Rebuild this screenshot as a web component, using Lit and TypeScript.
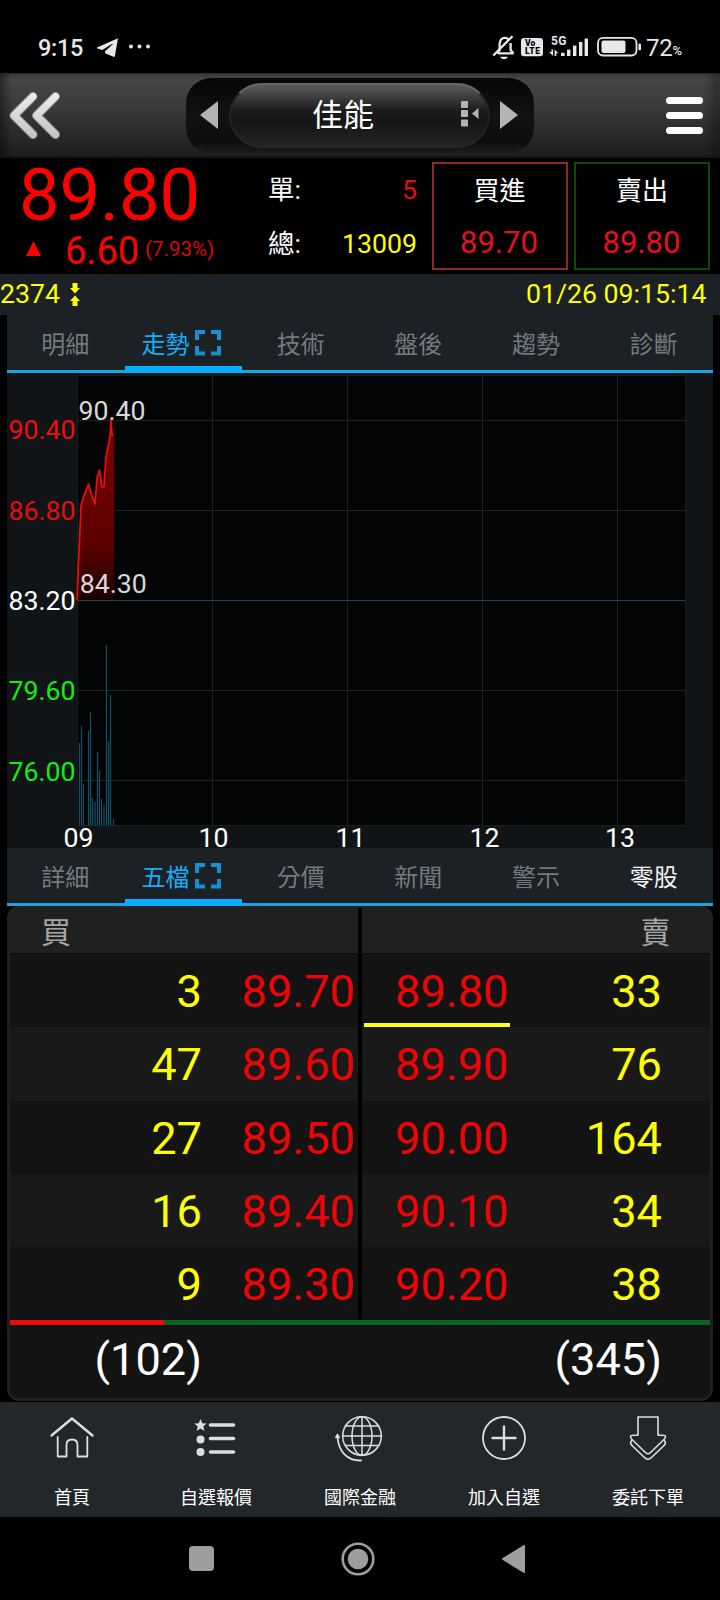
import { LitElement, html, css, svg } from "lit";
import { customElement, property } from "lit/decorators.js";
import { classMap } from "lit/directives/class-map.js";

const FONT = css`Roboto, "Noto Sans CJK TC", sans-serif`;

@customElement("status-bar")
class StatusBar extends LitElement {
  static styles = css`
    :host { display: flex; justify-content: space-between; height: 73px; box-sizing: border-box;
      padding: 34px 38px 0 38px; color: #e8e8e8; font: 400 24px/28px ${FONT}; }
    .group { display: flex; align-items: flex-start; }
    .clock { width: 59px; letter-spacing: -0.3px; font-weight: 500; font-size: 23.5px; }
    .batt { margin-left: 3px; letter-spacing: -0.3px; }
    .pct { font-size: 13px; line-height: 34px; font-weight: 500; }
    svg { display: block; }
  `;
  render() {
    return html`
      <div class="group">
        <span class="clock">9:15</span>
        <svg width="56" height="26" viewBox="97 34 56 26" fill="#e8e8e8">
          <path d="M118 38.2 97 47.4c-.4.5-.2 1 .4 1.2l4.9 1.500 9.6-6.200c.6-.3 1 .1.600.5l-7.600 7.200.2 1.600 8.300 3.600c.7.3 1.300 0 1.500-.8z"/>
          <circle cx="131" cy="46.500" r="2"/><circle cx="139.500" cy="46.500" r="2"/><circle cx="148" cy="46.500" r="2"/>
        </svg>
      </div>
      <div class="group">
        <svg width="152" height="26" viewBox="491 34 152 26">
          <g fill="none" stroke="#e8e8e8" stroke-width="2.300">
            <path d="M498 53.400h15.500M497 53.300l2.600-3.300v-5.200c0-4.600 2.400-7 5.200-7 1.600 0 2.800.5 3.800 1.600M510.600 43v7l3 3.400"/>
            <path d="M493.300 55.500 512.500 36.200"/>
          </g>
          <path d="M500 56.800h8c-.8 1.600-2.200 2.400-4 2.400s-3.200-.8-4-2.400z" fill="#e8e8e8"/>
          <rect x="521" y="38" width="22" height="18.300" rx="3" fill="#e8e8e8"/>
          <text x="525" y="46.400" font-family="Roboto" font-weight="900" font-size="8.500">Vo</text>
          <text x="525" y="54.400" font-family="Roboto" font-weight="900" font-size="8.500" textLength="15">LTE</text>
          <text x="551" y="45.400" font-family="Roboto" font-weight="700" font-size="12" fill="#e8e8e8" textLength="15.500">5G</text>
          <g fill="#e8e8e8">
            <path d="M551.400 49.500h1.700v6.400l-4-4h2.300zM554.600 56v-6.600l3.800 3.800h-2.100V56z"/>
            <rect x="561" y="52.800" width="3.600" height="3.200"/><rect x="567" y="49.600" width="3.400" height="6.400"/>
            <rect x="573" y="45.600" width="3.400" height="10.400"/><rect x="579" y="42" width="3.400" height="14"/>
            <rect x="584.600" y="38.600" width="3.400" height="17.400"/>
            <rect x="601.500" y="40.500" width="24" height="12.600" rx="2"/>
            <rect x="638.400" y="43.600" width="2.600" height="6.600" rx="1"/>
          </g>
          <rect x="598" y="37.800" width="38.500" height="17.700" rx="5" fill="none" stroke="#e8e8e8" stroke-width="1.800"/>
        </svg>
        <span class="batt">72</span><span class="pct">%</span>
      </div>`;
  }
}

@customElement("title-bar")
class TitleBar extends LitElement {
  static styles = css`
    :host { display: grid; grid-template-columns: 178px 348px 1fr; align-items: center; height: 85px; box-sizing: border-box;
      padding: 0 17px 0 8px; border-top: 1px solid #2b2b2b; border-bottom: 2px solid #141414;
      background: linear-gradient(90deg, #0006, #0000 12px, #0000 704px, #0004 716px), linear-gradient(#383838, #464646 6%, #3a3a3a 40%, #2a2a2a 72%, #1e1e1e);
      color: #fff; font-family: ${FONT}; }
    .pod { display: flex; align-items: center; justify-content: space-between; width: 348px; height: 75px;
      box-sizing: border-box; padding: 0 16px 0 14px; border-radius: 25px;
      background: linear-gradient(#060606, #121212 50%, #0c0c0c 85%, #1c1c1c); }
    .pill { display: grid; grid-template-columns: 1fr 21px; align-items: center; width: 261px; height: 65px; box-sizing: border-box;
      padding: 0 9px 0 32px; border-radius: 33px; border: 2px solid #222; border-top-color: #666; border-bottom-color: #262626;
      background: linear-gradient(#5b5b5b, #3a3a3a 22%, #1b1b1b 42%, #161616 60%, #242424); }
    .name { font-size: 31px; line-height: 61px; text-align: center; padding-right: 34px; }
    .pill svg { margin-left: 3px; margin-bottom: 3px; }
    .menu { justify-self: end; }
    svg { display: block; }
  `;
  render() {
    return html`
      <svg width="54" height="50" viewBox="8 90 54 50" fill="none" stroke-linecap="round" stroke-linejoin="round">
        <defs><linearGradient id="g" x1="0" y1="92" x2="0" y2="138" gradientUnits="userSpaceOnUse">
          <stop offset="0" stop-color="#eee"/><stop offset="1" stop-color="#c4c4c4"/></linearGradient></defs>
        <path d="M33 96.500 14 115.500 33 134.500M55.500 96.500 36.500 115.500 55.500 134.500" stroke="#8a8a8a" stroke-width="9"/>
        <path d="M33 96.500 14 115.500 33 134.500M55.500 96.500 36.500 115.500 55.500 134.500" stroke="url(#g)" stroke-width="7"/>
      </svg>
      <div class="pod">
        <svg width="18" height="28" viewBox="0 0 18 28"><path d="M0 14 18 0v28z" fill="#b4b4b4"/></svg>
        <div class="pill">
          <div class="name">佳能</div>
          <svg width="18" height="26" viewBox="0 0 18 26" fill="#b4b4b4">
            <rect width="7" height="7" rx="1"/><rect y="9" width="7" height="7" rx="1"/><rect y="18.500" width="7" height="7" rx="1"/>
            <path d="M11 12.500 17.500 7v11z"/>
          </svg>
        </div>
        <svg width="18" height="28" viewBox="0 0 18 28"><path d="M18 14 0 0v28z" fill="#b4b4b4"/></svg>
      </div>
      <svg class="menu" width="37" height="37" viewBox="0 0 37 37" fill="#fff">
        <rect width="37" height="7" rx="3.500"/><rect y="15" width="37" height="7" rx="3.500"/><rect y="30" width="37" height="7" rx="3.500"/>
      </svg>`;
  }
}

@customElement("quote-summary")
class QuoteSummary extends LitElement {
  static styles = css`
    :host { display: block; font-family: ${FONT}; color: #fff; }
    .top { display: grid; grid-template-columns: 268px 150px 135px 135px; height: 116px; box-sizing: border-box; }
    .last { font-size: 72px; line-height: 72px; padding: 2px 0 0 19px; color: #f00; }
    .change { display: flex; color: #f00; font-size: 38px; line-height: 38px; padding-left: 26px; }
    .up { margin: 9px 24px 0 0; }
    .ratio { font-size: 20.500px; line-height: 34px; margin-left: 6px; color: #d80808; }
    .volume { padding: 5px 1px 0 0; }
    .line { display: flex; justify-content: space-between; font-size: 26.500px; line-height: 54px; height: 54px; }
    .line span + span { font-size: 26.700px; }
    .red { color: #e60d0d; }
    .yellow { color: #ff0; }
    .deal { margin: 4px 0 4px 13.500px; width: 136px; border: 2px solid #8c2a2a; box-sizing: border-box; text-align: center;
      font-size: 26px; line-height: 54px; }
    .deal.sell { margin-left: 21px; border-color: #0d480d; }
    .deal .price { font-size: 31px; line-height: 50px; color: #e6101c; padding-right: 1px; }
    .stamp { display: flex; justify-content: space-between; height: 41px; padding-right: 13.500px; color: #ff0;
      background: #1b2124; font-size: 26.700px; line-height: 41px; }
    .code { display: flex; gap: 10px; }
    .code svg { margin-top: 9px; }
    svg { display: block; }
  `;
  render() {
    return html`
      <div class="top">
        <div>
          <div class="last">89.80</div>
          <div class="change">
            <svg class="up" width="15" height="15" viewBox="0 0 15 15"><path d="M7.500 0 15 15H0z" fill="#f00"/></svg>
            <span>6.60</span><span class="ratio">(7.93%)</span>
          </div>
        </div>
        <div class="volume">
          <div class="line"><span>單:</span><span class="red">5</span></div>
          <div class="line"><span>總:</span><span class="yellow">13009</span></div>
        </div>
        <div class="deal">買進<div class="price">89.70</div></div>
        <div class="deal sell">賣出<div class="price">89.80</div></div>
      </div>
      <div class="stamp">
        <span class="code">2374
          <svg width="10" height="23" viewBox="0 0 10 23" fill="#ff0">
            <path d="M2.500 0h5v5H10L5 10.500 0 5h2.500zM2.500 23h5v-5H10L5 12.500 0 18h2.500z"/>
          </svg>
        </span>
        <span>01/26 09:15:14</span>
      </div>`;
  }
}

@customElement("tab-strip")
class TabStrip extends LitElement {
  @property({ attribute: false }) tabs: string[] = [];
  @property({ type: Number }) lit = -1;
  static styles = css`
    :host { display: grid; grid-template-columns: repeat(6, 1fr); height: 58px; margin: 0 7px; background: #1b2124;
      box-shadow: inset 0 -3px #1ba4e4; font: 400 24px/60px ${FONT}; color: #747a7e; }
    .tab { display: flex; justify-content: center; gap: 6px; box-sizing: border-box; height: 58px; padding-right: 1px; }
    .active { color: #16aefc; border-bottom: 7px solid #07aefc; padding-right: 4px; }
    .bright { color: #f2f2f2; }
    svg { display: block; margin-top: 15px; }
  `;
  render() {
    return this.tabs.map((t, i) => html`
      <div class=${classMap({ tab: true, active: i === 1, bright: i === this.lit })}>
        <span>${t}</span>
        ${i === 1 ? html`<svg width="26" height="26" viewBox="0 0 26 26" fill="none" stroke="#1a8fd0" stroke-width="4">
          <path d="M2 10V2h8M16 2h8v8M24 16v7.500h-8M10 23.500H2V16"/></svg>` : ""}
      </div>`);
  }
}

@customElement("trend-chart")
class TrendChart extends LitElement {
  static styles = css`
    :host { display: block; height: 475px; margin: 0 7px; background: #111417; }
    svg { display: block; overflow: visible; font: 400 26.700px Roboto, sans-serif; }
    .grid { stroke: #1e2224; fill: none; }
    .base { stroke: #26414f; }
    .vol { stroke: #15506a; stroke-width: 1.200; }
    .price { fill: none; stroke: #f00a0a; stroke-width: 1.700; stroke-linejoin: round; }
    .edge { fill: #d8d8d8; }
    .time { fill: #fff; }
  `;
  render() {
    const line = "M77 600 78.500 563 81 506 83.500 497 88.500 484 91 493 95 504 97 478 99.500 470 102 487 104 487 106 457 110 437 111 420 112 434 113 436";
    const volumes = [[79.500, 743], [81.500, 726], [83.500, 784], [88.500, 731], [90.500, 712], [92.500, 798], [95, 802], [97.500, 752],
      [99.500, 771], [101.500, 799], [104, 805], [106.500, 645], [108.500, 741], [110.500, 695], [113.500, 819]];
    const scale: [string, number, string][] = [["90.40", 439, "#f00d0d"], ["86.80", 519.500, "#e60d0d"], ["83.20", 609.500, "#fff"],
      ["79.60", 699.500, "#12ee12"], ["76.00", 780.500, "#12ee12"]];
    const hours: [string, number][] = [["09", 78.500], ["10", 213.500], ["11", 350.500], ["12", 484.500], ["13", 620]];
    return html`
      <svg width="706" height="475" viewBox="7 373 706 475">
        <defs><linearGradient id="fill" x1="0" y1="420" x2="0" y2="600" gradientUnits="userSpaceOnUse">
          <stop offset="0" stop-color="#7a0000"/><stop offset=".7" stop-color="#5c0000"/><stop offset="1" stop-color="#1c0000"/>
        </linearGradient></defs>
        <rect x="77.500" y="375.500" width="608" height="450" fill="#030504" stroke="#1a1d1f"/>
        ${[212.500, 347.500, 482.500, 617.500].map((x) => svg`<path class="grid" d="M${x} 376V825"/>`)}
        ${[420.500, 510.500, 690.500, 780.500].map((y) => svg`<path class="grid" d="M78 ${y}H685"/>`)}
        ${volumes.map(([x, y]) => svg`<path class="vol" d="M${x} ${y}V825.500"/>`)}
        <path d="${line} 114 436V600H77z" fill="url(#fill)"/>
        <path class="base" d="M78 600.500H685"/>
        <path class="price" d=${line}/>
        ${scale.map(([t, y, c]) => svg`<text x="8.500" y=${y} fill=${c}>${t}</text>`)}
        <text class="edge" x="78.500" y="419.500">90.40</text>
        <text class="edge" x="79.800" y="592.500">84.30</text>
        ${hours.map(([t, x]) => svg`<text class="time" x=${x} y="847" text-anchor="middle">${t}</text>`)}
      </svg>`;
  }
}

@customElement("order-book")
class OrderBook extends LitElement {
  static styles = css`
    :host { display: block; height: 495px; box-sizing: border-box; margin: 0 7px; padding: 0 3px; border-radius: 12px;
      background: #202020; color: #fff; font: 400 45.200px/75px ${FONT}; }
    .head, .row { display: grid; grid-template-columns: 348px 4px 1fr; }
    .head { height: 48px; border-bottom: 1px solid #0b0b0b; box-sizing: border-box; font-size: 30px; line-height: 53px; font-weight: 400; color: #a6a6a6; }
    .left { padding-left: 31px; }
    .right { padding-right: 39.500px; text-align: right; }
    .mid { background: #000; }
    .head .mid { margin-top: 2px; }
    .row { height: 73.300px; background: #131313; }
    .row:nth-child(odd) { background: #191919; }
    .bid, .ask { display: grid; height: 73.300px; text-align: right; }
    .bid { grid-template-columns: 192px 1fr; padding-right: 3px; }
    .ask { grid-template-columns: 147.500px 1fr; padding-right: 48px; }
    .qty { color: #ff0; }
    .price { color: #ec0407; }
    .ask .price { padding-right: 1px; margin-left: 2px; box-sizing: border-box; height: 73.300px; }
    .best .ask .price { border-bottom: 4.500px solid #ffff1c; }
    .ratio { height: 4.500px; display: flex; background: #0c6220; }
    .buy { background: #e80c0c; }
    .totals { display: grid; grid-template-columns: 192px 1fr; height: 73.500px; line-height: 70px; background: #131313; text-align: right; border-radius: 0 0 8px 8px; }
    .totals span + span { padding-right: 48px; }
  `;
  render() {
    const rows = [["3", "89.70", "89.80", "33"], ["47", "89.60", "89.90", "76"], ["27", "89.50", "90.00", "164"],
      ["16", "89.40", "90.10", "34"], ["9", "89.30", "90.20", "38"]];
    return html`
      <div class="head"><div class="left">買</div><div class="mid"></div><div class="right">賣</div></div>
      ${rows.map(([bq, bp, ap, aq], i) => html`
        <div class=${classMap({ row: true, best: i === 0 })}>
          <div class="bid"><span class="qty">${bq}</span><span class="price">${bp}</span></div>
          <div class="mid"></div>
          <div class="ask"><span class="price">${ap}</span><span class="qty">${aq}</span></div>
        </div>`)}
      <div class="ratio"><div class="buy" style="width:22%"></div></div>
      <div class="totals"><span>(102)</span><span>(345)</span></div>`;
  }
}

@customElement("app-nav")
class AppNav extends LitElement {
  static styles = css`
    :host { display: grid; grid-template-columns: repeat(5, 1fr); height: 115px; margin-top: 1px; box-sizing: border-box; background: #22272b;
      color: #fff; font: 400 18px/26px ${FONT}; }
    .item { display: flex; flex-direction: column; align-items: center; gap: 24px; padding-top: 11px; }
    svg { display: block; fill: none; stroke: #dcdfe1; stroke-width: 1.800; stroke-linejoin: round; stroke-linecap: round; }
    .solid { fill: #dcdfe1; stroke: none; }
  `;
  render() {
    const items = [
      ["首頁", svg`<path d="M3.500 22.500 24 5.500 44.500 22.500" stroke-width="2.400"/><path d="M9.700 24V43.500h8.800V32c0-3.500 2-5.500 5.500-5.500s5.500 2 5.500 5.500v11.500h9.800V24"/>`],
      ["自選報價", svg`<path d="M18.500 12h23M18.500 25.500h23M18.500 39h23" stroke-width="3.600"/><path class="solid" d="m8.500 6 1.800 4.200 4.200.3-3.200 3 1.100 4.600-3.900-2.500-3.900 2.500 1.100-4.600-3.200-3 4.200-.3z"/><circle class="solid" cx="8.500" cy="26.500" r="4"/><circle class="solid" cx="8.500" cy="39" r="4"/>`],
      ["國際金融", svg`<g stroke-width="1.500"><circle cx="26" cy="23" r="19.300"/><path d="M26 3.500v39M6.500 23h39M9.500 13h33M9.500 32.500h33"/><ellipse cx="26" cy="23" rx="10" ry="19.300"/><path d="M1.500 24C2.500 39 12 48 25 47.500" stroke-width="1.800"/><path d="m-.2 24.500 1.500-3 2 3z"/></g>`],
      ["加入自選", svg`<circle cx="24" cy="25" r="21"/><path d="M12.500 25h23M24 13.500v23" stroke-width="2.400"/>`],
      ["委託下單", svg`<g stroke-width="1.600"><path d="M14 4h20v18c3 1 7-1 7.500 1.500.2 1-.5 2-1.500 3L26.500 39.500c-1.500 1.500-3.500 1.500-5 0L8 26.500c-1-1-1.700-2-1.500-3C7 21 11 23 14 22z"/><path d="M8 27c-2 2-2 3.500 0 5.500L20.500 44.500c2.500 2.500 4.500 2.500 7 0L40 32.500c2-2 2-3.500 0-5.500"/></g>`],
    ];
    return items.map(([t, icon]) => html`<div class="item"><svg width="48" height="48" viewBox="0 0 48 48" overflow="visible">${icon}</svg><span>${t}</span></div>`);
  }
}

@customElement("system-nav")
class SystemNav extends LitElement {
  static styles = css`
    :host { display: flex; justify-content: space-between; align-items: center; height: 83px; box-sizing: border-box; padding: 0 195px 0 189px; }
    svg { display: block; }
  `;
  render() {
    return html`
      <svg width="25" height="25" viewBox="0 0 25 25"><rect width="25" height="25" rx="4" fill="#9e9e9e"/></svg>
      <svg width="34" height="34" viewBox="0 0 34 34"><circle cx="17" cy="17" r="15.300" fill="none" stroke="#9e9e9e" stroke-width="2.600"/><circle cx="17" cy="17" r="10.300" fill="#9e9e9e"/></svg>
      <svg width="23" height="28" viewBox="0 0 23 28"><path d="M1 14 22 1v26z" fill="#9e9e9e" stroke="#9e9e9e" stroke-width="2" stroke-linejoin="round"/></svg>`;
  }
}

@customElement("app-root")
class AppRoot extends LitElement {
  static styles = css`
    :host { display: block; width: 720px; height: 1600px; background: #000; overflow: hidden; }
  `;
  render() {
    return html`
      <status-bar></status-bar>
      <title-bar></title-bar>
      <quote-summary></quote-summary>
      <tab-strip .tabs=${["明細", "走勢", "技術", "盤後", "趨勢", "診斷"]}></tab-strip>
      <trend-chart></trend-chart>
      <tab-strip .tabs=${["詳細", "五檔", "分價", "新聞", "警示", "零股"]} .lit=${5}></tab-strip>
      <order-book></order-book>
      <app-nav></app-nav>
      <system-nav></system-nav>`;
  }
}
